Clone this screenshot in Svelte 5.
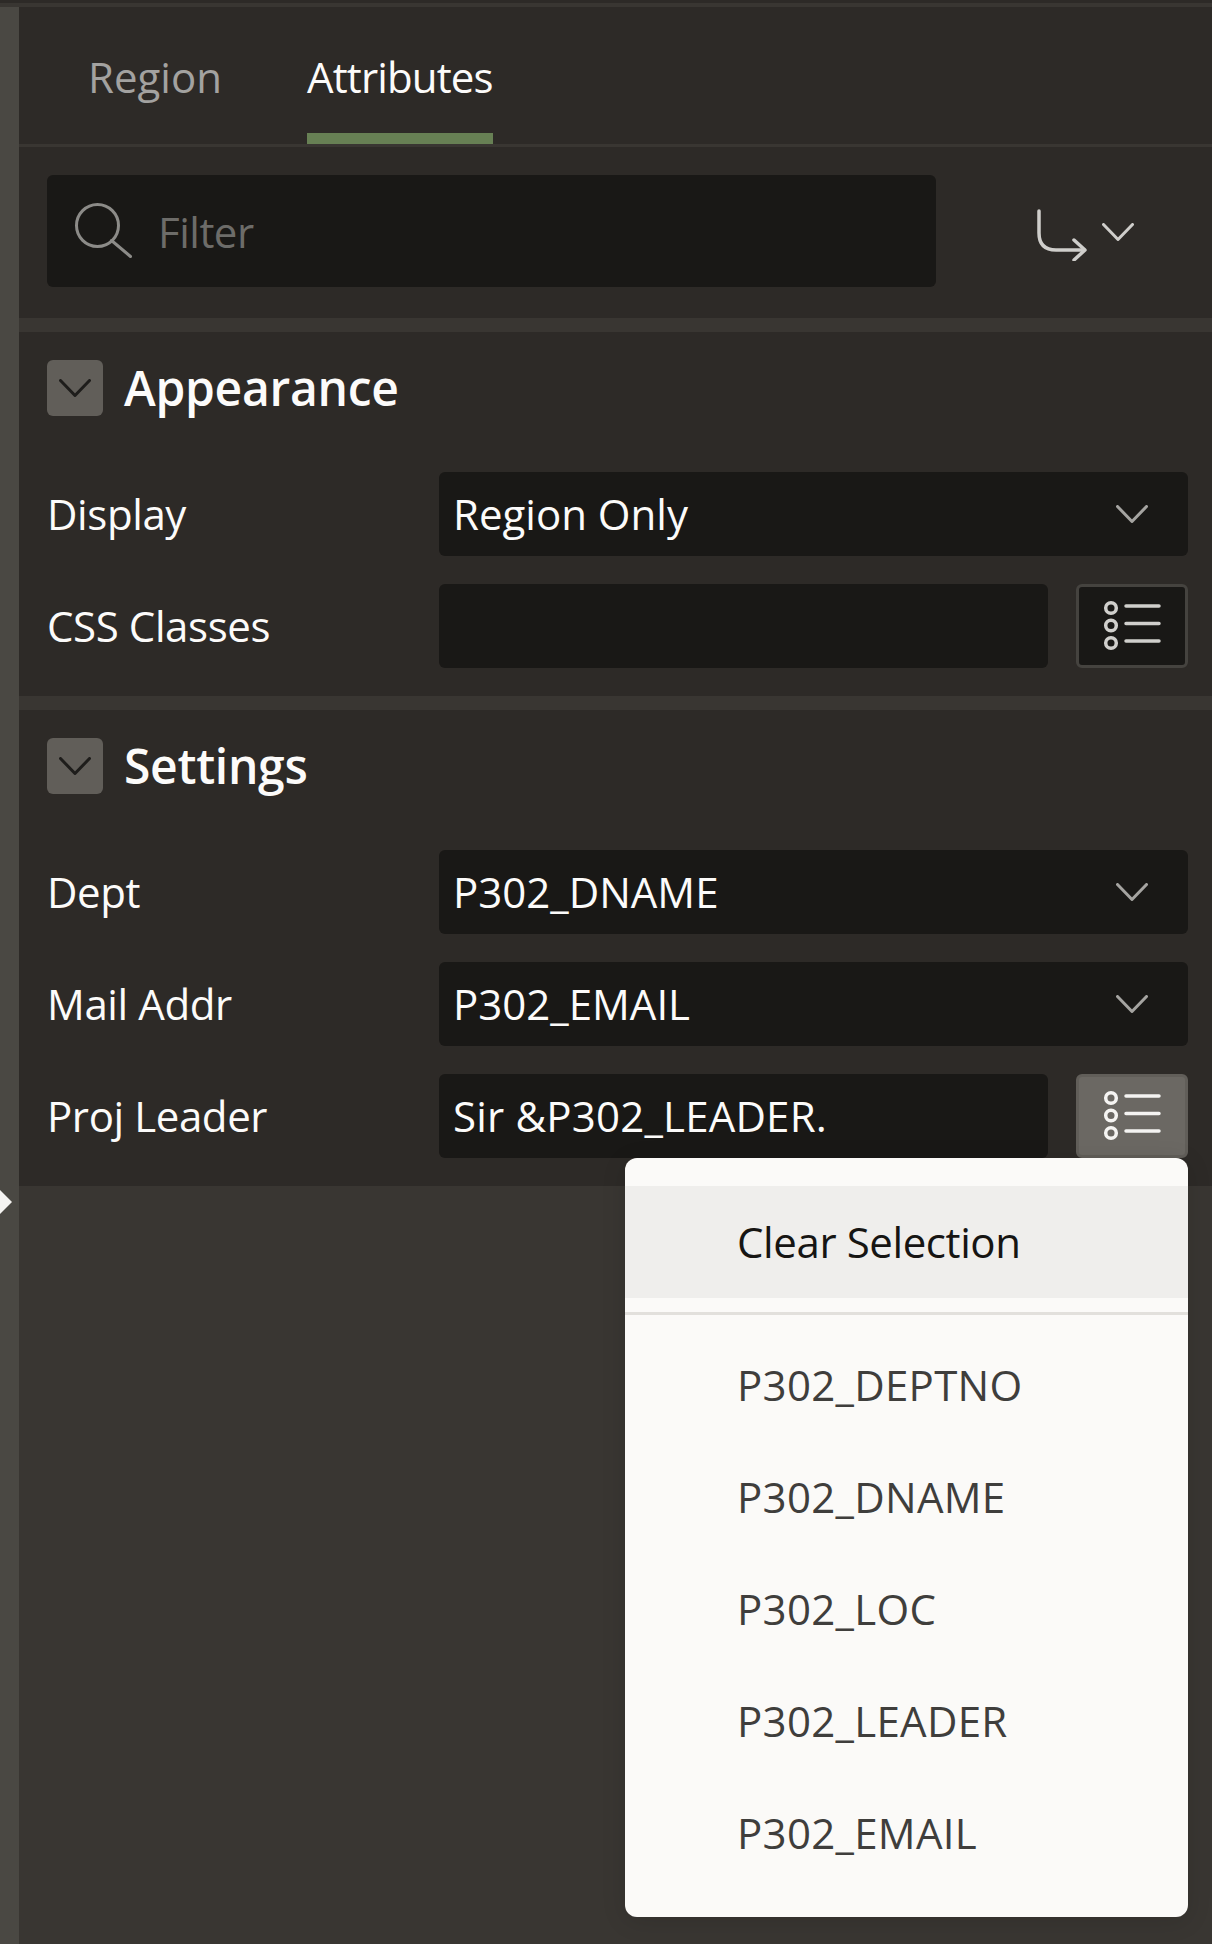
<script>
  const items = ['P302_DEPTNO', 'P302_DNAME', 'P302_LOC', 'P302_LEADER', 'P302_EMAIL'];
</script>

{#snippet chevron(cls)}
  <svg class={cls} viewBox="0 0 32 18" fill="none" stroke="currentColor" stroke-width="3" stroke-linecap="round" stroke-linejoin="round">
    <path d="M1.5 1.5 16 16.5 30.5 1.5" />
  </svg>
{/snippet}

{#snippet listIcon()}
  <svg class="list-icon" viewBox="0 0 112 84" fill="none" stroke="currentColor" stroke-width="3.5" stroke-linecap="round">
    <circle cx="35" cy="24" r="5.3" />
    <circle cx="35" cy="41.5" r="5.3" />
    <circle cx="35" cy="59" r="5.3" />
    <path d="M50 22H83M50 39.5H83M50 57H83" />
  </svg>
{/snippet}

{#snippet header(title)}
  <div class="section-head">
    <div class="toggle">{@render chevron('toggle-chevron')}</div>
    <h2>{title}</h2>
  </div>
{/snippet}

{#snippet selectRow(label, value)}
  <div class="row">
    <div class="label">{label}</div>
    <div class="field select">
      <span>{value}</span>
      {@render chevron('select-chevron')}
    </div>
  </div>
{/snippet}

<div class="app">
  <div class="topline"></div>
  <div class="body">
    <div class="rail"><span class="rail-handle"></span></div>
    <div class="main">
      <div class="panel">
        <div class="tabs">
          <div class="tab">Region</div>
          <div class="tab active">Attributes</div>
        </div>

        <div class="toolbar">
          <div class="filter">
            <svg class="search" viewBox="0 0 58 56" fill="none" stroke="currentColor" stroke-width="3" stroke-linecap="round">
              <circle cx="22.5" cy="22.5" r="21" />
              <path d="M36.5 37.5 55.5 53.5" />
            </svg>
            <span>Filter</span>
          </div>
          <div class="goto">
            <svg class="goto-arrow" viewBox="0 0 50 52" fill="none" stroke="currentColor" stroke-width="3.5" stroke-linecap="round" stroke-linejoin="round">
              <path d="M2 2V24Q2 41 19 41H47" />
              <path d="M37 31 48 41 37 51" />
            </svg>
            {@render chevron('goto-chevron')}
          </div>
        </div>

        <div class="band"></div>

        <section>
          {@render header('Appearance')}
          {@render selectRow('Display', 'Region Only')}
          <div class="row">
            <div class="label">CSS Classes</div>
            <div class="field text"></div>
            <div class="list-btn">{@render listIcon()}</div>
          </div>
        </section>

        <div class="band"></div>

        <section>
          {@render header('Settings')}
          {@render selectRow('Dept', 'P302_DNAME')}
          {@render selectRow('Mail Addr', 'P302_EMAIL')}
          <div class="row">
            <div class="label">Proj Leader</div>
            <div class="field text"><span>Sir &amp;P302_LEADER.</span></div>
            <div class="list-btn on">{@render listIcon()}</div>
            <div class="popup">
              <div class="clear">Clear Selection</div>
              <div class="sep"></div>
              {#each items as item}
                <div class="item">{item}</div>
              {/each}
            </div>
          </div>
        </section>
      </div>
    </div>
  </div>
</div>

<style>
  :global(html, body) {
    margin: 0;
    background: #393632;
  }

  .app {
    width: 1212px;
    height: 1944px;
    overflow: hidden;
    display: flex;
    flex-direction: column;
    font-family: 'Open Sans', 'Noto Sans', sans-serif;
    font-size: 42px;
    color: #fcfbfa;
  }

  .topline {
    height: 3px;
    flex: none;
    margin-top: 4px;
    background: #393632;
    box-shadow: 0 -4px 0 #2d2a27;
  }

  .body {
    flex: 1;
    display: flex;
  }

  .rail {
    width: 19px;
    flex: none;
    background: #4a4843;
    position: relative;
  }

  .rail-handle {
    position: absolute;
    left: 0;
    top: 1183px;
    width: 0;
    height: 0;
    border-left: 12px solid #f5f4f2;
    border-top: 12px solid transparent;
    border-bottom: 12px solid transparent;
  }

  .main {
    flex: 1;
  }

  .panel {
    background: #2d2a27;
  }

  .tabs {
    display: flex;
    gap: 85px;
    height: 137px;
    padding-left: 69px;
    border-bottom: 3px solid #393632;
  }

  .tab {
    height: 137px;
    line-height: 140px;
    box-sizing: border-box;
    color: #a3a2a0;
    letter-spacing: 0;
  }

  .tab.active {
    color: #fcfbfa;
    letter-spacing: -0.85px;
    border-bottom: 11px solid #678054;
  }

  .toolbar {
    display: flex;
    padding: 28px 0 31px 28px;
  }

  .filter {
    width: 889px;
    height: 112px;
    display: flex;
    align-items: center;
    background: #191816;
    border-radius: 6px;
    color: #6d6c69;
    letter-spacing: -0.5px;
  }

  .search {
    width: 58px;
    height: 56px;
    margin: 0 0 0 28px;
    color: #8c8b88;
  }

  .filter span {
    margin-left: 25px;
  }

  .goto {
    display: flex;
    align-items: center;
    margin-left: 101px;
    color: #cfcecb;
  }

  .goto-arrow {
    width: 50px;
    height: 52px;
    margin-top: 7px;
  }

  :global(.goto-chevron) {
    width: 32px;
    height: 18px;
    margin-left: 15px;
    margin-top: 2px;
  }

  .band {
    height: 14px;
    background: #393632;
  }

  section {
    padding: 28px 24px 28px 28px;
    display: flex;
    flex-direction: column;
    gap: 28px;
  }

  .section-head {
    display: flex;
    align-items: center;
    gap: 21px;
    height: 56px;
    margin-bottom: 28px;
  }

  .toggle {
    width: 56px;
    height: 56px;
    border-radius: 6px;
    background: #615e59;
    color: #1e1d1b;
    display: flex;
    align-items: center;
    justify-content: center;
  }

  :global(.toggle-chevron) {
    width: 32px;
    height: 18px;
  }

  h2 {
    margin: 0;
    font-size: 48px;
    font-weight: 600;
    letter-spacing: -0.3px;
    line-height: 60px;
  }

  .row {
    display: flex;
    align-items: center;
    height: 84px;
    position: relative;
  }

  .label {
    width: 392px;
    flex: none;
    letter-spacing: -0.4px;
    margin-top: -2px;
  }

  .field {
    height: 84px;
    box-sizing: border-box;
    padding: 0 14px;
    display: flex;
    align-items: center;
    background: #191816;
    border-radius: 6px;
  }

  .field span {
    margin-top: -2px;
  }

  .select {
    flex: 1;
    justify-content: space-between;
    padding-right: 40px;
  }

  :global(.select-chevron) {
    width: 32px;
    height: 18px;
    color: #a5a4a1;
  }

  .text {
    width: 609px;
    letter-spacing: 0.2px;
  }

  .list-btn {
    width: 112px;
    height: 84px;
    margin-left: 28px;
    box-sizing: border-box;
    border: 3px solid #45433f;
    border-radius: 6px;
    background: #191816;
    color: #d0cfcc;
    position: relative;
  }

  .list-btn.on {
    background: #6b6863;
    border-color: #615e59;
    color: #f5f4f2;
  }

  :global(.list-icon) {
    position: absolute;
    left: -3px;
    top: -3px;
    width: 112px;
    height: 84px;
  }

  .popup {
    position: absolute;
    right: 0;
    top: 84px;
    width: 563px;
    padding: 28px 0;
    background: #fbfaf8;
    border-radius: 12px;
    box-shadow: 0 4px 24px rgba(0, 0, 0, 0.12);
    color: #3f3e3c;
    z-index: 2;
  }

  .clear,
  .item {
    height: 112px;
    line-height: 112px;
    padding-left: 112px;
    letter-spacing: 0.3px;
  }

  .clear {
    background: #efeeec;
    color: #161513;
    letter-spacing: -0.4px;
  }

  .sep {
    height: 3px;
    margin: 14px 0;
    background: #e2e0dc;
  }
</style>
